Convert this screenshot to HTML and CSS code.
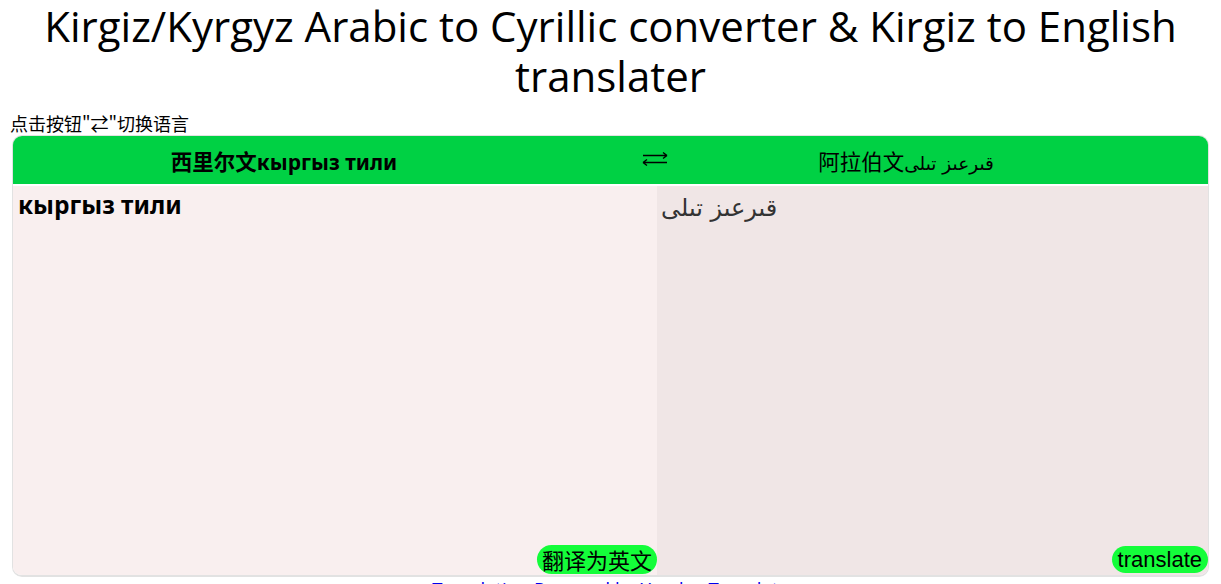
FILE: index.html
```html
<!DOCTYPE html>
<html lang="zh">
<head>
<meta charset="utf-8">
<title>Kirgiz/Kyrgyz Arabic to Cyrillic converter</title>
<link rel="stylesheet" href="styles.css">
</head>
<body>
<h1 class="title">Kirgiz/Kyrgyz Arabic to Cyrillic converter &amp; Kirgiz to English translater</h1>
<div class="hint">点击按钮"⇄"切换语言</div>
<div class="box">
  <div class="bar">
    <div class="lang lang-left"><span class="cjk">西里尔文</span>кыргыз тили</div>
    <div class="swap">
      <svg class="swap-icon" width="26" height="14" viewBox="0 0 26 14" aria-hidden="true">
        <path d="M1 3.5H25M25 3.5L21 0.5M25 3.5L21 6.5" fill="none" stroke="#000" stroke-width="1.3" stroke-linejoin="miter"/>
        <path d="M25 10.5H1M1 10.5L5 7.5M1 10.5L5 13.5" fill="none" stroke="#000" stroke-width="1.3" stroke-linejoin="miter"/>
      </svg>
    </div>
    <div class="lang lang-right"><span class="cjk">阿拉伯文</span><span class="ar" dir="rtl">قىرعىز تىلى</span></div>
    <div class="rest"></div>
  </div>
  <div class="panels">
    <div class="panel panel-left">
      <div class="text text-cyr">кыргыз тили</div>
      <button class="btn">翻译为英文</button>
    </div>
    <div class="panel panel-right">
      <div class="text text-ar"><span dir="rtl">قىرعىز تىلى</span></div>
      <button class="btn btn-en">translate</button>
    </div>
  </div>
</div>
<div class="foot"><a class="link" href="#">Translation Powered by Yandex.Translate</a></div>
</body>
</html>
```
FILE: styles.css
```css
html, body {
  margin: 0;
  padding: 0;
  background: #fff;
}
body {
  padding: 0 11px 0 11px;
  font-family: "Noto Sans", "Noto Sans CJK SC", sans-serif;
  color: #000;
}
.title {
  margin: 0;
  font-family: "Open Sans", "Noto Sans", sans-serif;
  font-weight: 400;
  font-size: 42px;
  line-height: 50px;
  text-align: center;
  padding-top: 1px;
}
.hint {
  margin-top: 10px;
  font-family: "Noto Sans CJK SC", sans-serif;
  font-size: 18px;
  line-height: 24px;
  margin-left: -1px;
}
.box {
  margin: 0 1px 0 1px;
  border: 1px solid #e2e2e2;
  border-bottom-width: 2px;
  border-radius: 10px;
  overflow: hidden;
  background: #fff;
}
.bar {
  height: 48px;
  background: #00d144;
  display: grid;
  grid-template-columns: 542px 200px 302px 1fr;
  align-items: center;
  font-size: 21px;
}
.lang {
  text-align: center;
  white-space: nowrap;
}
.cjk {
  font-family: "Noto Sans CJK SC", sans-serif;
  font-size: 21.5px;
}
.lang-left {
  font-weight: 700;
  font-family: "Noto Sans", "Noto Sans CJK SC", sans-serif;
}
.lang-right {
  font-family: "Noto Sans CJK SC", "DejaVu Sans", sans-serif;
}
.ar {
  font-family: "DejaVu Sans", sans-serif;
  font-size: 18.5px;
}
.swap {
  display: flex;
  justify-content: center;
  align-items: center;
}
.swap-icon {
  display: block;
  margin-top: -2px;
}
.panels {
  display: flex;
  margin-top: 2px;
  height: 389px;
}
.panel {
  display: flex;
  flex-direction: column;
  justify-content: space-between;
  align-items: flex-end;
}
.panel-left {
  width: 644px;
  background: #f9efef;
}
.panel-right {
  flex: 1;
  background: #f0e6e6;
}
.text {
  align-self: stretch;
  line-height: 32px;
}
.text-cyr {
  font-weight: 700;
  font-size: 24.5px;
  padding: 3px 5px;
}
.text-ar {
  padding: 6px 4px;
  color: #333;
  font-family: "DejaVu Sans", sans-serif;
  font-size: 24px;
}
.btn {
  font-family: "Noto Sans CJK SC", sans-serif;
  font-size: 22px;
  line-height: 29px;
  padding: 0 5px;
  border: 0;
  border-radius: 15px;
  background: #14fd3a;
  color: #000;
  margin-bottom: 1px;
}
.btn-en {
  font-family: "Liberation Sans", Arial, sans-serif;
  padding: 0 6px 0 6px;
  line-height: 27px;
  margin-bottom: 2px;
}
.foot {
  text-align: center;
  font-size: 18.5px;
  line-height: 24px;
  margin-top: 0;
}
.link {
  color: #0000ee;
  text-decoration: none;
  font-family: "Open Sans", sans-serif;
}
```
